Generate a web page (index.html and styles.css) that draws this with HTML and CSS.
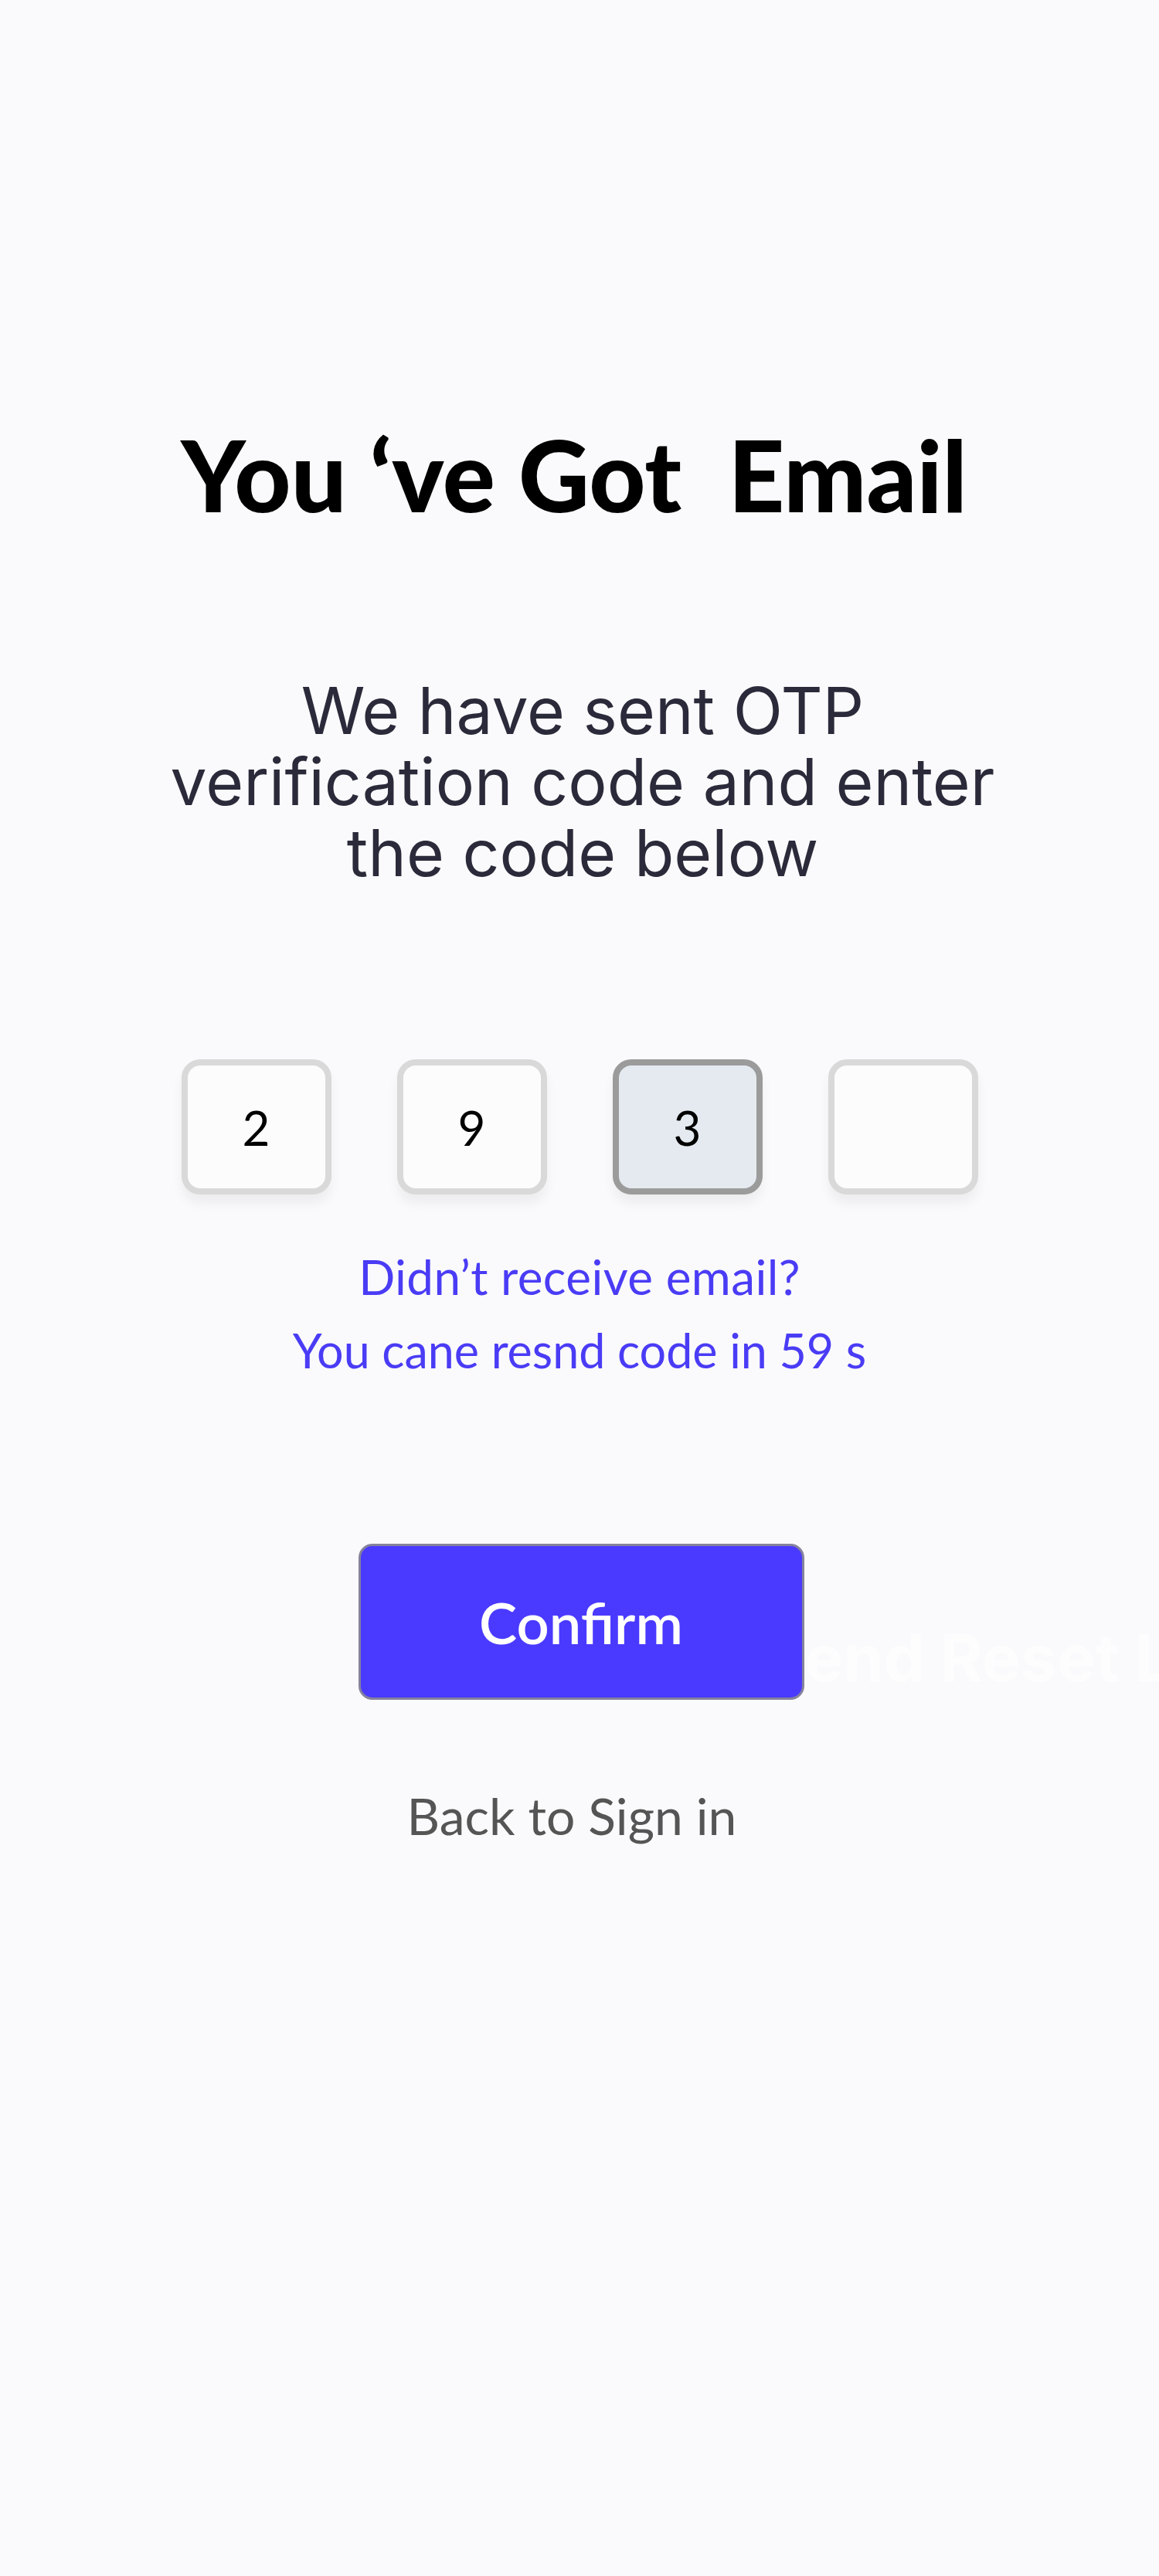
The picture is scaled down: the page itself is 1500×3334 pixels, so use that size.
FILE: index.html
```html
<!DOCTYPE html>
<html lang="en">
<head>
<meta charset="utf-8">
<title>You've Got Email</title>
<link rel="stylesheet" href="styles.css">
</head>
<body>
<main class="page">
  <h1 class="title">You ‘ve Got&nbsp; Email</h1>
  <p class="subtitle">We have sent OTP verification code and enter the code below</p>
  <div class="otp">
    <div class="otp-box">2</div>
    <div class="otp-box">9</div>
    <div class="otp-box otp-box--active">3</div>
    <div class="otp-box"></div>
  </div>
  <div class="resend">
    <p class="resend-line resend-line--q">Didn’t receive email?</p>
    <p class="resend-line">You cane resnd code in 59 s</p>
  </div>
  <div class="actions">
    <button class="btn-confirm" type="button">Confirm</button>
    <span class="ghost">Send Reset Link</span>
  </div>
  <a class="back-link" href="#">Back to Sign in</a>
</main>
</body>
</html>
```

FILE: styles.css
```css
html, body {
  margin: 0;
  padding: 0;
  background: #fafafc;
}

.page {
  width: 1500px;
  min-height: 3334px;
  overflow: hidden;
  display: flex;
  flex-direction: column;
  align-items: center;
  font-family: "Lato", "Noto Sans", sans-serif;
}

.title {
  margin: 551px 14px 0 0;
  font-family: "Lato", sans-serif;
  font-weight: 900;
  font-size: 127px;
  line-height: 126px;
  color: #000;
  letter-spacing: 0;
  white-space: nowrap;
}

.subtitle {
  margin: 197px 0 0 8px;
  max-width: 1120px;
  text-align: center;
  font-family: "Inter", sans-serif;
  font-weight: 400;
  font-size: 84px;
  line-height: 92px;
  color: #2b2a3a;
}

.otp {
  margin-top: 221px;
  display: flex;
  gap: 85px;
}

.otp-box {
  box-sizing: border-box;
  width: 194px;
  height: 175px;
  border: 8px solid #d9d9d9;
  border-radius: 24px;
  background: #fcfcfd;
  box-shadow: 0 12px 14px rgba(0, 0, 0, 0.05);
  display: flex;
  align-items: center;
  justify-content: center;
  font-family: "Lato", sans-serif;
  font-size: 62px;
  color: #000;
}

.otp-box--active {
  background: #e4eaf0;
  border-color: #9b9b9b;
}

.resend {
  margin-top: 59px;
  display: flex;
  flex-direction: column;
  align-items: center;
}

.resend-line {
  margin: 0;
  font-family: "Lato", sans-serif;
  font-size: 61px;
  line-height: 95px;
  color: #4a3cf5;
}

.resend-line--q {
  font-size: 62px;
  letter-spacing: 0.4px;
}

.actions {
  margin: 203px 0 0 4px;
  position: relative;
}

.btn-confirm {
  position: relative;
  z-index: 1;
  box-sizing: border-box;
  width: 577px;
  height: 202px;
  border: 3px solid #85829c;
  border-radius: 18px;
  background: #4a3aff;
  color: #fff;
  font-family: "Lato", sans-serif;
  font-weight: 600;
  font-size: 74px;
  padding: 0;
}

.ghost {
  position: absolute;
  left: 523px;
  top: 106px;
  z-index: 0;
  white-space: nowrap;
  font-family: "Inter", sans-serif;
  font-weight: 700;
  font-size: 84px;
  line-height: 84px;
  color: #fdfdfe;
}

.back-link {
  margin: 110px 20px 0 0;
  font-family: "Lato", sans-serif;
  font-size: 66px;
  line-height: 80px;
  color: #555555;
  text-decoration: none;
}
```
